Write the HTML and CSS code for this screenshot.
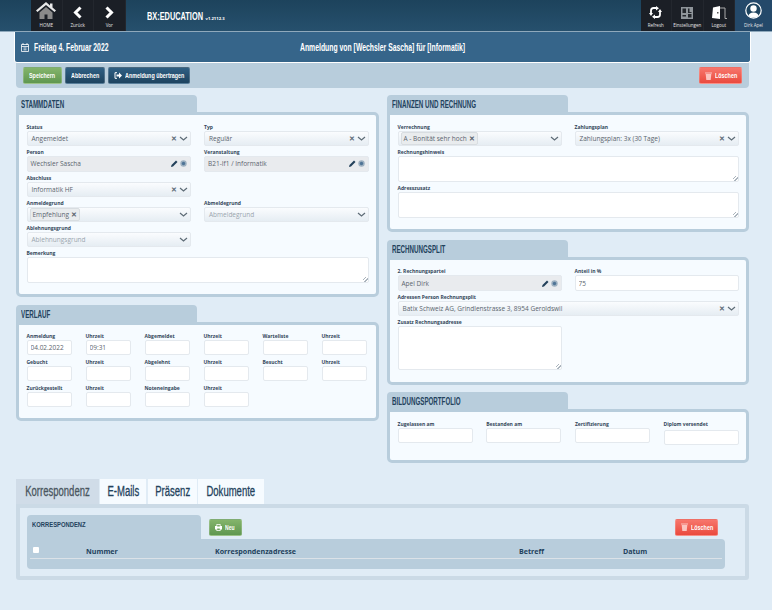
FILE: index.html
```html
<!DOCTYPE html>
<html lang="de">
<head>
  <meta charset="UTF-8">
  <title>BX:EDUCATION - Anmeldung</title>
  <link rel="stylesheet" href="styles.css">
</head>
<body>
  <header class="topbar">
    <nav class="nav-group nav-left">
      <a class="nav-item">
        <svg width="20" height="17" viewBox="0 0 20 17"><path d="M10 0 0 8.500 1.500 10 10 3 18.500 10 20 8.500 16.500 5.500V1.500H14V3.500Z" fill="#e8e8e8"/><path d="M3.500 10.500 10 5 16.500 10.500V17H11.500V12.500H8.500V17H3.500Z" fill="#8a8a8a"/></svg>
        <span>HOME</span>
      </a>
      <a class="nav-item">
        <svg width="10" height="13" viewBox="0 0 10 13"><path d="M7.500 1.500 2.500 6.500 7.500 11.500" fill="none" stroke="#fff" stroke-width="3"/></svg>
        <span>Zurück</span>
      </a>
      <a class="nav-item">
        <svg width="10" height="13" viewBox="0 0 10 13"><path d="M2.500 1.500 7.500 6.500 2.500 11.500" fill="none" stroke="#fff" stroke-width="3"/></svg>
        <span>Vor</span>
      </a>
    </nav>
    <div class="brand"><span class="brand-name">BX:EDUCATION</span><small>v1.2112.3</small></div>
    <nav class="nav-group nav-right">
      <a class="nav-item">
        <svg width="13" height="13" viewBox="0 0 13 13"><path d="M2 8V4.500Q2 2 4.500 2H8M11 5V8.500Q11 11 8.500 11H5" fill="none" stroke="#fff" stroke-width="1.800"/><path d="M7 0 10 2.200 7 4.500ZM6 8.500 3 10.800 6 13Z" fill="#fff"/><path d="M0 7H4L2 10ZM9 6H13L11 3Z" fill="#fff"/></svg>
        <span>Refresh</span>
      </a>
      <a class="nav-item">
        <svg width="12" height="12" viewBox="0 0 12 12"><path d="M0 0H12V12H0Z" fill="#8f959a"/><path d="M1.500 1.500H5V6H1.500ZM7 7H10.500V10.500H7ZM7 1.500H8.500V5H10.500V6H7ZM1.500 8H5V9.500H1.500Z" fill="#23272c"/></svg>
        <span>Einstellungen</span>
      </a>
      <a class="nav-item">
        <svg width="16" height="13" viewBox="0 0 16 13"><path d="M1 12 2 1.500 9 0V13Z" fill="#fff"/><path d="M9 2H14V12.500H16" fill="none" stroke="#aaa" stroke-width="1"/><path d="M6 6H7.500V7.500H6Z" fill="#555"/></svg>
        <span>Logout</span>
      </a>
      <a class="nav-item nav-user">
        <svg width="17" height="17" viewBox="0 0 17 17"><circle cx="8.500" cy="8.500" r="7.700" fill="#1f4560" stroke="#fff" stroke-width="1.200"/><circle cx="8.500" cy="6.500" r="3.200" fill="#fff"/><path d="M3.500 14Q4 10.500 8.500 10.500 13 10.500 13.500 14 8.500 17 3.500 14Z" fill="#fff"/></svg>
        <span>Dirk Apel</span>
      </a>
    </nav>
  </header>

  <main class="page">
    <div class="date-bar">
      <div class="date">
        <svg width="8" height="9" viewBox="0 0 8 9"><path d="M0.500 1.500H7.500V8.500H0.500ZM0.500 3.500H7.500M2 0V2M6 0V2M2.500 5H5.500M2.500 6.800H5.500" fill="none" stroke="#fff" stroke-width="0.800"/></svg>
        <span class="date-text">Freitag 4. Februar 2022</span>
      </div>
      <div class="date-title">Anmeldung von [Wechsler Sascha] für [Informatik]</div>
    </div>

    <div class="action-bar">
      <button class="btn btn-green btn-save"><span>Speichern</span></button>
      <button class="btn btn-blue btn-cancel"><span>Abbrechen</span></button>
      <button class="btn btn-blue btn-transfer">
        <svg width="8" height="7" viewBox="0 0 8 7"><path d="M3 0.700H1V6.300H3" fill="none" stroke="#fff"/><path d="M2.500 2.500H5V0.500L8 3.500 5 6.500V4.500H2.500Z" fill="#fff"/></svg>
        <span>Anmeldung übertragen</span>
      </button>
      <button class="btn btn-red btn-end">
        <svg width="7" height="8" viewBox="0 0 7 8"><path d="M0 0.500H7V1.500H0ZM0.700 2H6.300L5.700 8H1.300Z" fill="#fbc4bf"/></svg>
        <span>Löschen</span>
      </button>
    </div>

    <div class="columns">
      <div class="column">
        <section class="panel">
          <h2 class="panel-tab"><span>STAMMDATEN</span></h2>
          <div class="panel-body form-two">
            <div class="field">
              <label>Status</label>
              <div class="select"><span>Angemeldet</span><i class="clear">✕</i><svg class="chev" width="9" height="5" viewBox="0 0 9 5"><path d="M1 1 4.500 4 8 1" fill="none" stroke="#5d6b76" stroke-width="1.200"/></svg></div>
            </div>
            <div class="field">
              <label>Typ</label>
              <div class="select"><span>Regulär</span><i class="clear">✕</i><svg class="chev" width="9" height="5" viewBox="0 0 9 5"><path d="M1 1 4.500 4 8 1" fill="none" stroke="#5d6b76" stroke-width="1.200"/></svg></div>
            </div>
            <div class="field">
              <label>Person</label>
              <div class="lookup"><span>Wechsler Sascha</span>
                <svg width="7" height="7" viewBox="0 0 7 7"><path d="M0 7 0.500 5 5 0.500 6.500 2 2 6.500Z" fill="#23405a"/></svg>
                <svg width="7" height="7" viewBox="0 0 7 7"><circle cx="3.500" cy="3.500" r="3.200" fill="#9db0c0"/><circle cx="3.500" cy="3.500" r="1.700" fill="#4f7496"/></svg>
              </div>
            </div>
            <div class="field">
              <label>Veranstaltung</label>
              <div class="lookup"><span>B21-If1 / Informatik</span>
                <svg width="7" height="7" viewBox="0 0 7 7"><path d="M0 7 0.500 5 5 0.500 6.500 2 2 6.500Z" fill="#23405a"/></svg>
                <svg width="7" height="7" viewBox="0 0 7 7"><circle cx="3.500" cy="3.500" r="3.200" fill="#9db0c0"/><circle cx="3.500" cy="3.500" r="1.700" fill="#4f7496"/></svg>
              </div>
            </div>
            <div class="field">
              <label>Abschluss</label>
              <div class="select"><span>Informatik HF</span><i class="clear">✕</i><svg class="chev" width="9" height="5" viewBox="0 0 9 5"><path d="M1 1 4.500 4 8 1" fill="none" stroke="#5d6b76" stroke-width="1.200"/></svg></div>
            </div>
            <div class="field"></div>
            <div class="field">
              <label>Anmeldegrund</label>
              <div class="select"><b class="chip">Empfehlung <i>✕</i></b><span></span><svg class="chev" width="9" height="5" viewBox="0 0 9 5"><path d="M1 1 4.500 4 8 1" fill="none" stroke="#5d6b76" stroke-width="1.200"/></svg></div>
            </div>
            <div class="field">
              <label>Abmeldegrund</label>
              <div class="select"><span class="placeholder">Abmeldegrund</span><svg class="chev" width="9" height="5" viewBox="0 0 9 5"><path d="M1 1 4.500 4 8 1" fill="none" stroke="#5d6b76" stroke-width="1.200"/></svg></div>
            </div>
            <div class="field">
              <label>Ablehnungsgrund</label>
              <div class="select"><span class="placeholder">Ablehnungsgrund</span><svg class="chev" width="9" height="5" viewBox="0 0 9 5"><path d="M1 1 4.500 4 8 1" fill="none" stroke="#5d6b76" stroke-width="1.200"/></svg></div>
            </div>
            <div class="field"></div>
            <div class="field span-two">
              <label>Bemerkung</label>
              <textarea class="area area-short"></textarea>
            </div>
          </div>
        </section>

        <section class="panel">
          <h2 class="panel-tab"><span>VERLAUF</span></h2>
          <div class="panel-body form-six">
            <div class="field"><label>Anmeldung</label><input class="input" value="04.02.2022"></div>
            <div class="field"><label>Uhrzeit</label><input class="input" value="09:31"></div>
            <div class="field"><label>Abgemeldet</label><input class="input"></div>
            <div class="field"><label>Uhrzeit</label><input class="input"></div>
            <div class="field"><label>Warteliste</label><input class="input"></div>
            <div class="field"><label>Uhrzeit</label><input class="input"></div>
            <div class="field"><label>Gebucht</label><input class="input"></div>
            <div class="field"><label>Uhrzeit</label><input class="input"></div>
            <div class="field"><label>Abgelehnt</label><input class="input"></div>
            <div class="field"><label>Uhrzeit</label><input class="input"></div>
            <div class="field"><label>Besucht</label><input class="input"></div>
            <div class="field"><label>Uhrzeit</label><input class="input"></div>
            <div class="field"><label>Zurückgestellt</label><input class="input"></div>
            <div class="field"><label>Uhrzeit</label><input class="input"></div>
            <div class="field"><label>Noteneingabe</label><input class="input"></div>
            <div class="field"><label>Uhrzeit</label><input class="input"></div>
          </div>
        </section>
      </div>

      <div class="column">
        <section class="panel">
          <h2 class="panel-tab"><span>FINANZEN UND RECHNUNG</span></h2>
          <div class="panel-body form-two">
            <div class="field">
              <label>Verrechnung</label>
              <div class="select"><b class="chip">A - Bonität sehr hoch <i>✕</i></b><span></span><svg class="chev" width="9" height="5" viewBox="0 0 9 5"><path d="M1 1 4.500 4 8 1" fill="none" stroke="#5d6b76" stroke-width="1.200"/></svg></div>
            </div>
            <div class="field">
              <label>Zahlungsplan</label>
              <div class="select"><span>Zahlungsplan: 3x (30 Tage)</span><i class="clear">✕</i><svg class="chev" width="9" height="5" viewBox="0 0 9 5"><path d="M1 1 4.500 4 8 1" fill="none" stroke="#5d6b76" stroke-width="1.200"/></svg></div>
            </div>
            <div class="field span-two">
              <label>Rechnungshinweis</label>
              <textarea class="area area-short"></textarea>
            </div>
            <div class="field span-two">
              <label>Adresszusatz</label>
              <textarea class="area area-short"></textarea>
            </div>
          </div>
        </section>

        <section class="panel">
          <h2 class="panel-tab"><span>RECHNUNGSPLIT</span></h2>
          <div class="panel-body form-two">
            <div class="field">
              <label>2. Rechnungspartei</label>
              <div class="lookup"><span>Apel Dirk</span>
                <svg width="7" height="7" viewBox="0 0 7 7"><path d="M0 7 0.500 5 5 0.500 6.500 2 2 6.500Z" fill="#23405a"/></svg>
                <svg width="7" height="7" viewBox="0 0 7 7"><circle cx="3.500" cy="3.500" r="3.200" fill="#9db0c0"/><circle cx="3.500" cy="3.500" r="1.700" fill="#4f7496"/></svg>
              </div>
            </div>
            <div class="field"><label>Anteil in %</label><input class="input input-tall" value="75"></div>
            <div class="field span-two">
              <label>Adressen Person Rechnungsplit</label>
              <div class="select"><span>Batix Schweiz AG, Grindlenstrasse 3, 8954 Geroldswil</span><i class="clear">✕</i><svg class="chev" width="9" height="5" viewBox="0 0 9 5"><path d="M1 1 4.500 4 8 1" fill="none" stroke="#5d6b76" stroke-width="1.200"/></svg></div>
            </div>
            <div class="field">
              <label>Zusatz Rechnungsadresse</label>
              <textarea class="area area-long"></textarea>
            </div>
          </div>
        </section>

        <section class="panel">
          <h2 class="panel-tab"><span>BILDUNGSPORTFOLIO</span></h2>
          <div class="panel-body form-four">
            <div class="field"><label>Zugelassen am</label><input class="input"></div>
            <div class="field"><label>Bestanden am</label><input class="input"></div>
            <div class="field"><label>Zertifizierung</label><input class="input"></div>
            <div class="field field-low"><label>Diplom versendet</label><input class="input"></div>
          </div>
        </section>
      </div>
    </div>

    <div class="tabs">
      <a class="tab active"><span>Korrespondenz</span></a>
      <a class="tab"><span>E-Mails</span></a>
      <a class="tab"><span>Präsenz</span></a>
      <a class="tab"><span>Dokumente</span></a>
    </div>
    <section class="tab-panel">
      <div class="list-head">
        <h3 class="list-tab"><span>KORRESPONDENZ</span></h3>
        <button class="btn btn-green btn-new">
          <svg width="7" height="7" viewBox="0 0 7 7"><path d="M1.500 0H5.500V2H7V5.500H5.500V7H1.500V5.500H0V2H1.500ZM2.200 0.700V2.500H4.800V0.700ZM2.200 4.500V6.300H4.800V4.500Z" fill="#fff" fill-rule="evenodd"/></svg>
          <span>Neu</span>
        </button>
        <button class="btn btn-red btn-end">
          <svg width="7" height="8" viewBox="0 0 7 8"><path d="M0 0.500H7V1.500H0ZM0.700 2H6.300L5.700 8H1.300Z" fill="#fbc4bf"/></svg>
          <span>Löschen</span>
        </button>
      </div>
      <div class="list-table">
        <div class="list-row">
          <span class="check"></span>
          <span class="col-num">Nummer</span>
          <span class="col-adr">Korrespondenzadresse</span>
          <span class="col-bet">Betreff</span>
          <span class="col-dat">Datum</span>
        </div>
      </div>
    </section>
  </main>
</body>
</html>
```

FILE: styles.css
```css
html, body {
  height: 610px;
  overflow: hidden;
}
body {
  margin: 0;
  background: #e0ecf6;
  color: #5b656e;
  font-family: 'Open Sans', Arial, sans-serif;
  font-size: 6.500px;
}
h2, h3 {
  margin: 0;
}

/* the headings are a condensed face, squeezed from Liberation Sans */
.brand-name, .date-text, .date-title, .btn span, .panel-tab span, .tab span, .list-tab span {
  display: inline-block;
  flex-shrink: 0;
  white-space: nowrap;
  font-family: 'Liberation Sans', Arial, sans-serif;
  font-weight: bold;
  transform-origin: left center;
}

/* top navigation */
.topbar {
  display: flex;
  align-items: stretch;
  height: 31px;
  background: linear-gradient(180deg, #1d435c, #26506d);
  border-bottom: 1px solid #8fa9bc;
}
.nav-group {
  display: flex;
  background: #1b1f26;
}
.nav-left {
  margin-left: 31px;
}
.nav-item {
  display: flex;
  flex-direction: column;
  align-items: center;
  justify-content: flex-end;
  gap: 3px;
  width: 31.500px;
  padding-bottom: 3px;
  box-sizing: border-box;
  color: #e6e6e6;
  font-size: 4.500px;
  border-right: 1px solid #23272e;
}
.nav-user {
  width: 37px;
  background: #24496a;
  border-right: none;
}
.brand {
  margin-left: 21px;
  flex: 1;
  color: #fff;
  font-size: 11px;
  line-height: 32px;
}
.brand-name {
  width: 59px;
  transform: scaleX(.67);
}
.brand small {
  font-weight: bold;
  font-size: 4.200px;
}

.page {
  padding: 0 23px 0 16px;
}

/* date bar */
.date-bar {
  display: grid;
  grid-template-columns: 1fr auto 1fr;
  align-items: center;
  height: 31px;
  margin: 0 -2px;
  padding: 0 6px;
  box-sizing: border-box;
  background: #36658a;
  border: solid #fff;
  border-width: 0 1px 1px 1px;
  border-radius: 0 0 3px 3px;
  color: #fff;
  font-size: 10px;
}
.date {
  display: flex;
  align-items: center;
  gap: 5px;
}
.date-text {
  transform: scaleX(.68);
}
.date-title {
  transform: scaleX(.685);
  transform-origin: center;
}

/* action bar */
.action-bar {
  display: flex;
  align-items: center;
  gap: 3px;
  height: 25px;
  padding: 0 7px;
  background: #b8cddc;
  border-radius: 0 0 4px 4px;
}
.btn {
  display: flex;
  align-items: center;
  gap: 3px;
  width: 43px;
  height: 17px;
  padding: 0 0 0 5px;
  box-sizing: border-box;
  border: 1px solid #fff3;
  border-radius: 2px;
  color: #fff;
  font-size: 7.500px;
}
.btn svg {
  flex-shrink: 0;
}
.btn span {
  transform: scaleX(.72);
}
.btn-save {
  width: 39px;
}
.btn-cancel {
  width: 40px;
}
.btn-transfer {
  width: 82px;
}
.btn-new {
  width: 33px;
  margin: 4px 0 0 8px;
  font-size: 7px;
}
.btn-new + .btn-end {
  margin-top: 4px;
  margin-right: 7px;
}
.btn-green {
  background: linear-gradient(180deg, #84b46b, #5f9750);
}
.btn-blue {
  background: linear-gradient(180deg, #2f5f83, #1d435f);
}
.btn-red {
  background: linear-gradient(180deg, #f7766c, #ea4a3e);
}
.btn-end {
  margin-left: auto;
}

/* panels */
.columns {
  display: grid;
  grid-template-columns: 363px 362px;
  gap: 8px;
  margin-top: 7px;
}
.column {
  display: flex;
  flex-direction: column;
  gap: 7.500px;
}
.panel-tab {
  width: 181px;
  height: 17px;
  padding-left: 5px;
  box-sizing: border-box;
  background: #b8cddc;
  border-radius: 4px 4px 0 0;
  color: #23425c;
  font-size: 10px;
  line-height: 18px;
}
.panel-tab span {
  transform: scaleX(.62);
}
.panel-body {
  display: grid;
  padding: 8.500px 7.500px 11.500px;
  background: #f6fbff;
  border: 3px solid #b8cddc;
  border-radius: 0 5px 5px 5px;
}
.form-two {
  grid-template-columns: 1fr 1fr;
  column-gap: 13px;
  row-gap: 3px;
}
.form-six {
  grid-template-columns: repeat(6, 45.500px);
  column-gap: 13.500px;
  row-gap: 4px;
  padding-bottom: 10.500px;
}
.form-four {
  grid-template-columns: repeat(4, 75px);
  column-gap: 13.700px;
  padding-bottom: 14.500px;
}
.span-two {
  grid-column: span 2;
}
.field-low .input {
  margin-top: 3.500px;
}

/* fields */
.field label {
  display: block;
  height: 6px;
  margin-bottom: 1px;
  color: #33475a;
  font-weight: 700;
  font-size: 5px;
  line-height: 6px;
}
.select, .lookup, .input, .area {
  display: block;
  box-sizing: border-box;
  width: 100%;
  border: 1px solid #e4e9ee;
  border-radius: 2px;
  color: #5b656e;
  font-family: 'Open Sans', Arial, sans-serif;
  font-size: 6.500px;
}
.select {
  display: flex;
  align-items: center;
  gap: 2px;
  height: 15px;
  padding: 0 2px 0 4px;
  background: linear-gradient(180deg, #fafcfe, #e6edf3);
}
.select span {
  flex: 1;
  white-space: nowrap;
}
.select .placeholder {
  color: #9aa5ae;
}
.clear {
  color: #5d6b76;
  font-style: normal;
  font-weight: bold;
  font-size: 6.500px;
}
.chip {
  display: flex;
  align-items: center;
  gap: 2px;
  height: 13px;
  margin-left: -2px;
  padding: 0 2px;
  box-sizing: border-box;
  background: #e9ecee;
  border: 1px solid #d8dde1;
  border-radius: 2px;
  font-weight: normal;
  white-space: nowrap;
}
.chip i {
  font-style: normal;
  font-weight: bold;
}
.lookup {
  display: flex;
  align-items: center;
  gap: 2px;
  height: 16px;
  padding: 0 3px;
  background: #e9ebee;
}
.lookup span {
  flex: 1;
}
.input {
  height: 15px;
  padding: 0 3px;
  background: #fff;
  outline: none;
}
.input-tall {
  height: 16px;
}
.area {
  margin: 0;
  padding: 2px;
  background: #fff;
  resize: vertical;
}
.area::-webkit-resizer {
  background: repeating-linear-gradient(135deg, transparent 0 1.500px, #aab4bd 1.500px 2.500px) right bottom / 5px 5px no-repeat;
}
.area-short {
  height: 26px;
}
.area-long {
  height: 44px;
}

/* tabs */
.tabs {
  display: flex;
  gap: 1px;
  margin-top: 16px;
  height: 25px;
}
.tab {
  display: flex;
  justify-content: center;
  width: 46px;
  background: #f6fbff;
  color: #23425c;
  font-size: 14px;
  line-height: 25px;
}
.tab span {
  transform: scaleX(.68);
  transform-origin: center;
  font-weight: normal;
  -webkit-text-stroke: .3px currentColor;
}
.tab:nth-child(1) {
  width: 83px;
}
.tab:nth-child(3) {
  width: 49px;
  margin-left: 1px;
}
.tab:nth-child(4) {
  width: 66px;
}
.tab.active {
  background: #d0dce8;
  color: #4a5660;
}
.tab-panel {
  height: 76px;
  padding: 7px 20px 0 7px;
  box-sizing: border-box;
  border: 4px solid #cbdae6;
  border-radius: 0 3px 3px 3px;
}
.list-head {
  display: flex;
  align-items: flex-start;
  height: 24px;
}
.list-tab {
  width: 174px;
  height: 24px;
  padding: 4px 0 0 5px;
  box-sizing: border-box;
  background: #b8cddc;
  border-radius: 4px 4px 0 0;
  color: #23425c;
  font-size: 7.500px;
}
.list-tab span {
  transform: scaleX(.78);
}
.list-table {
  height: 30px;
  padding: 0 3px;
  background: #b8cddc;
  border-radius: 0 4px 4px 4px;
}
.list-row {
  position: relative;
  height: 19px;
  border-bottom: 1px solid #dbe2e8;
  color: #23425c;
  font-weight: 700;
  font-size: 7.100px;
  line-height: 24px;
}
.check {
  position: absolute;
  left: 3px;
  top: 8px;
  width: 6px;
  height: 6px;
  background: #fff;
  border-radius: 1px;
}
.list-row span:not(.check) {
  position: absolute;
}
.col-num {
  left: 56px;
}
.col-adr {
  left: 185px;
}
.col-bet {
  left: 489px;
}
.col-dat {
  left: 593px;
}
```
